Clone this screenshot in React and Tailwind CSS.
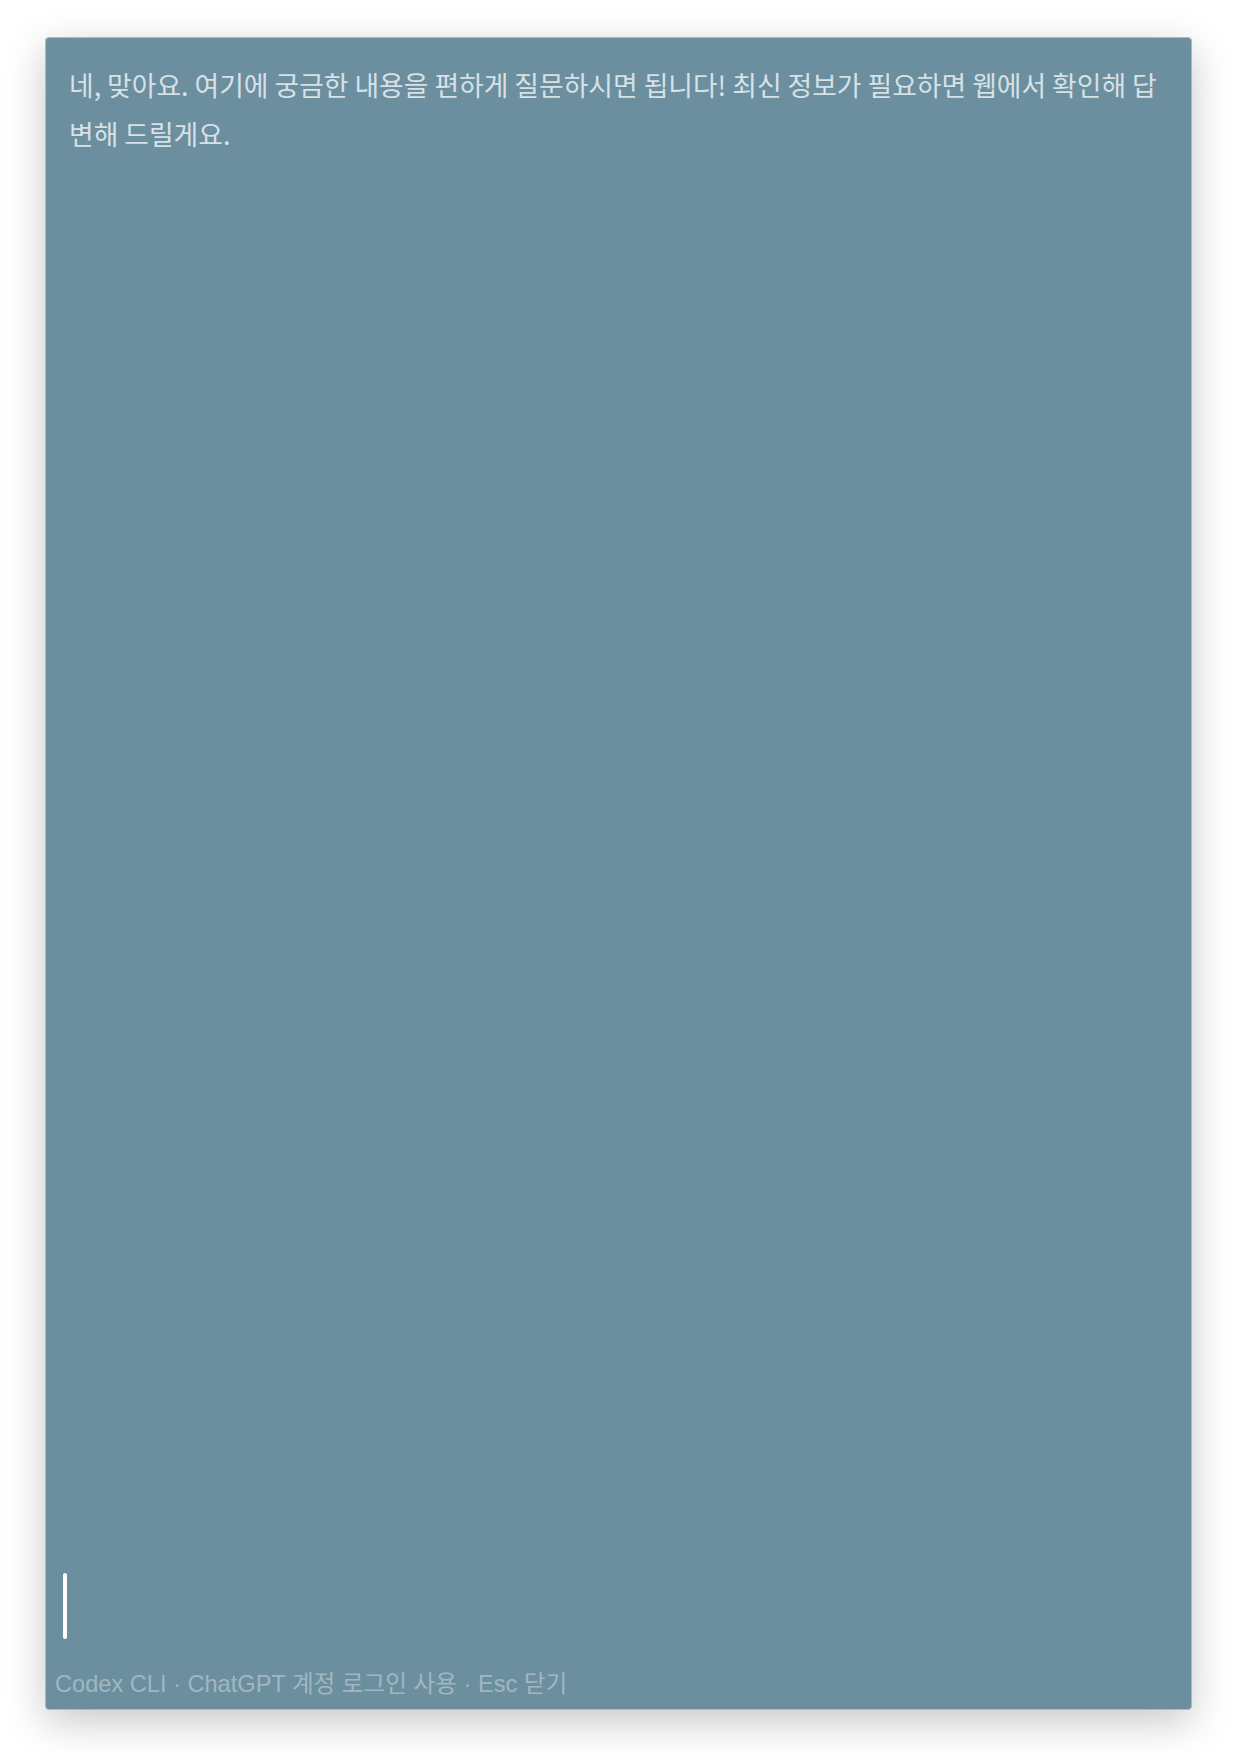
import React from 'react';

const MESSAGE =
  "네, 맞아요. 여기에 궁금한 내용을 편하게 질문하시면 됩니다! 최신 정보가 필요하면 웹에서 확인해 답변해 드릴게요.";

export default function App() {
  return (
    <div className="min-h-screen bg-white pt-[37px] pl-[45px]">
      <div className="w-[1147px] h-[1673px] flex flex-col bg-[#6b8f9f] border border-[#b4b8ba] rounded-[4px] shadow-[0_12px_40px_rgba(0,0,0,0.22)]">
        {/* Reply */}
        <div
          className="px-[23px] pt-[22px] text-[26.8px] leading-[49px] text-[#d7e1e6]"
          style={{ fontFamily: '"Noto Sans CJK KR", "Noto Sans", sans-serif' }}
        >
          {MESSAGE}
        </div>

        <div className="flex-1" />

        {/* Input caret */}
        <div className="pl-[17px]">
          <div className="w-[4px] h-[66px] rounded-full bg-white" />
        </div>

        {/* Footer */}
        <div
          className="pl-[9px] pt-[30px] pb-[10px] text-[23.6px] leading-[30px] text-[#a0b7c1]"
          style={{ fontFamily: '"Liberation Sans", "Noto Sans CJK KR", sans-serif' }}
        >
          Codex CLI · ChatGPT 계정 로그인 사용 · Esc 닫기
        </div>
      </div>
    </div>
  );
}
